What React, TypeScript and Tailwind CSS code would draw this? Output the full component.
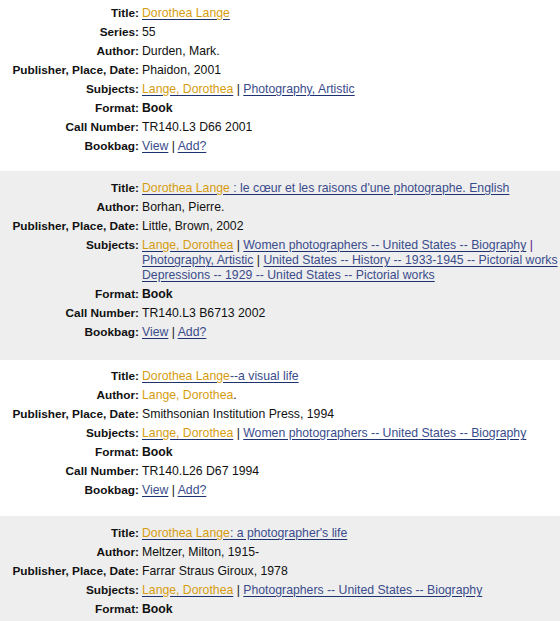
import type { ReactNode } from 'react';

const hl = 'text-[#d69c10]';
const linkCls = 'text-[#3a4c8c] underline decoration-[#1f3270] underline-offset-[2px]';

function Hl({ children }: { children: ReactNode }) {
  return <span className={hl}>{children}</span>;
}

function A({ children }: { children: ReactNode }) {
  return (
    <a href="#" className={linkCls}>
      {children}
    </a>
  );
}

function Sep() {
  return <span className="text-[#222]"> | </span>;
}

function Row({ label, children }: { label: string; children: ReactNode }) {
  return (
    <div className="flex">
      <div className="w-[139px] shrink-0 py-[2px] text-right text-[11.8px] font-bold text-[#111]">{label}</div>
      <div className="py-[2px] pl-[3px] text-[12.25px] text-[#111]">{children}</div>
    </div>
  );
}

function Bookbag() {
  return (
    <Row label="Bookbag:">
      <A>View</A>
      <Sep />
      <A>Add?</A>
    </Row>
  );
}

export default function App() {
  return (
    <div className="h-[621px] overflow-hidden bg-white font-['Liberation_Sans',Arial,sans-serif] text-[12px] leading-[15px]">
      {/* record 1 */}
      <div className="bg-white pt-[4px] pb-[15px]">
        <Row label="Title:">
          <A>
            <Hl>Dorothea Lange</Hl>
          </A>
        </Row>
        <Row label="Series:">55</Row>
        <Row label="Author:">Durden, Mark.</Row>
        <Row label="Publisher, Place, Date:">Phaidon, 2001</Row>
        <Row label="Subjects:">
          <A>
            <Hl>Lange, Dorothea</Hl>
          </A>
          <Sep />
          <A>Photography, Artistic</A>
        </Row>
        <Row label="Format:">
          <span className="font-bold">Book</span>
        </Row>
        <Row label="Call Number:">TR140.L3 D66 2001</Row>
        <Bookbag />
      </div>

      {/* record 2 */}
      <div className="bg-[#eeeeee] pt-[8px] pb-[18px]">
        <Row label="Title:">
          <A>
            <Hl>Dorothea Lange</Hl> : le cœur et les raisons d'une photographe. English
          </A>
        </Row>
        <Row label="Author:">Borhan, Pierre.</Row>
        <Row label="Publisher, Place, Date:">Little, Brown, 2002</Row>
        <Row label="Subjects:">
          <div className="whitespace-nowrap">
            <A>
              <Hl>Lange, Dorothea</Hl>
            </A>
            <Sep />
            <A>Women photographers -- United States -- Biography</A>
            <span className="text-[#5b1a86]"> |</span>
          </div>
          <div className="whitespace-nowrap">
            <A>Photography, Artistic</A>
            <Sep />
            <A>United States -- History -- 1933-1945 -- Pictorial works</A>
            <Sep />
          </div>
          <div className="whitespace-nowrap">
            <A>Depressions -- 1929 -- United States -- Pictorial works</A>
          </div>
        </Row>
        <Row label="Format:">
          <span className="font-bold">Book</span>
        </Row>
        <Row label="Call Number:">TR140.L3 B6713 2002</Row>
        <Bookbag />
      </div>

      {/* record 3 */}
      <div className="bg-white pt-[7px] pb-[16px]">
        <Row label="Title:">
          <A>
            <Hl>Dorothea Lange</Hl>--a visual life
          </A>
        </Row>
        <Row label="Author:">
          <Hl>Lange, Dorothea</Hl>.
        </Row>
        <Row label="Publisher, Place, Date:">Smithsonian Institution Press, 1994</Row>
        <Row label="Subjects:">
          <A>
            <Hl>Lange, Dorothea</Hl>
          </A>
          <Sep />
          <A>Women photographers -- United States -- Biography</A>
        </Row>
        <Row label="Format:">
          <span className="font-bold">Book</span>
        </Row>
        <Row label="Call Number:">TR140.L26 D67 1994</Row>
        <Bookbag />
      </div>

      {/* record 4 */}
      <div className="h-full bg-[#eeeeee] pt-[8px]">
        <Row label="Title:">
          <A>
            <Hl>Dorothea Lange</Hl>: a photographer's life
          </A>
        </Row>
        <Row label="Author:">Meltzer, Milton, 1915-</Row>
        <Row label="Publisher, Place, Date:">Farrar Straus Giroux, 1978</Row>
        <Row label="Subjects:">
          <A>
            <Hl>Lange, Dorothea</Hl>
          </A>
          <Sep />
          <A>Photographers -- United States -- Biography</A>
        </Row>
        <Row label="Format:">
          <span className="font-bold">Book</span>
        </Row>
      </div>
    </div>
  );
}
